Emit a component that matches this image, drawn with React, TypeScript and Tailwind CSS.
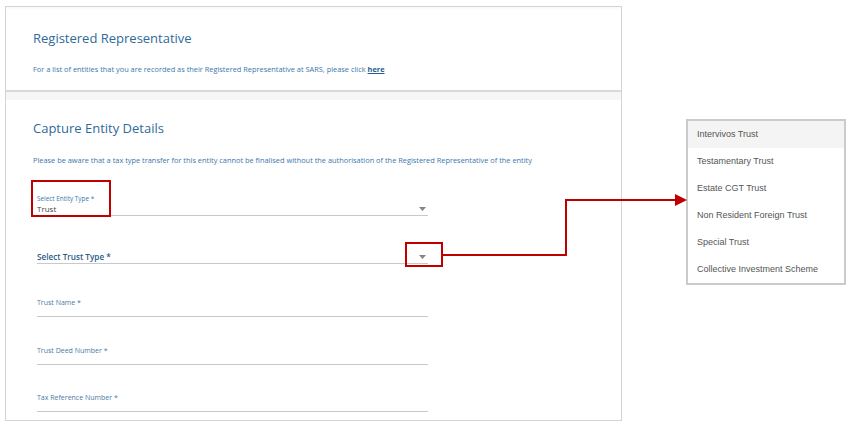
import { ReactNode } from "react";

const sans = { fontFamily: '"Open Sans", "Noto Sans", sans-serif' };
const arial = { fontFamily: '"Liberation Sans", Arial, sans-serif' };

const trustTypes = [
  "Intervivos Trust",
  "Testamentary Trust",
  "Estate CGT Trust",
  "Non Resident Foreign Trust",
  "Special Trust",
  "Collective Investment Scheme",
];

function Caret() {
  return (
    <svg width="7" height="4" viewBox="0 0 7 4" className="mr-[2px] mb-[4px]">
      <polygon points="0,0 7,0 3.5,4" fill="#858585" />
    </svg>
  );
}

function TextField({ label, h }: { label: string; h: string }) {
  return (
    <div className={`${h} flex flex-col justify-end border-b border-[#c9c9c9] pb-[8px]`}>
      <span className="text-[7px] leading-[10px] text-[#4a7aa6]">{label}</span>
    </div>
  );
}

function Section({ children, className }: { children: ReactNode; className?: string }) {
  return <div className={`px-[27px] ${className ?? ""}`}>{children}</div>;
}

export default function App() {
  return (
    <div className="relative w-[850px] h-[426px] bg-white overflow-hidden" style={sans}>
      <div className="flex items-start pl-[5px] pt-[6px]">
        {/* main form panel */}
        <div className="w-[617px] h-[415px] border border-[#d4d4d4] bg-white flex flex-col">
          <Section className="pt-[21px] h-[83px] bg-gradient-to-b from-[#f9f9f9] to-white from-0% to-[4%]">
            <h1 className="text-[13px] leading-[20px] text-[#2f6a9a]">Registered Representative</h1>
            <p className="mt-[16px] text-[7.4px] leading-[10px] text-[#3a78ab]">
              For a list of entities that you are recorded as their Registered Representative at SARS, please click{" "}
              <span className="font-bold underline text-[#245a88]">here</span>
            </p>
          </Section>
          <div className="h-[2px] bg-[#d9d9d9]" />
          <div className="h-[8px] bg-[#f6f6f6]" />

          <Section className="pt-[18px]">
            <h2 className="text-[13px] leading-[20px] text-[#2f6a9a]">Capture Entity Details</h2>
            <p className="mt-[17px] text-[7.4px] leading-[10px] text-[#3a78ab]">
              Please be aware that a tax type transfer for this entity cannot be finalised without the authorisation of the Registered Representative of the entity
            </p>

            <div className="ml-[4px] w-[391px]">
              {/* entity type select */}
              <div className="h-[51px] flex items-end justify-between border-b border-[#c9c9c9]">
                <div className="flex flex-col">
                  <span className="text-[6.4px] leading-[8px] text-[#3a78ab]">Select Entity Type *</span>
                  <span className="text-[8px] leading-[12px] text-[#444]">Trust</span>
                </div>
                <Caret />
              </div>

              {/* trust type select */}
              <div className="h-[48px] flex items-end justify-between border-b border-[#c9c9c9]">
                <span className="text-[8.2px] leading-[12px] font-semibold text-[#2b5b86]">Select Trust Type *</span>
                <Caret />
              </div>

              <TextField label="Trust Name *" h="h-[53px]" />
              <TextField label="Trust Deed Number *" h="h-[48px]" />
              <TextField label="Tax Reference Number *" h="h-[47px]" />
            </div>
          </Section>
        </div>

        {/* dropdown options */}
        <div className="ml-[64px] mt-[113px] w-[160px] border-2 border-[#cbcbcb] bg-white" style={arial}>
          {trustTypes.map((t, i) => (
            <div
              key={t}
              className={`h-[27px] flex items-center pl-[9px] text-[9px] text-[#555] ${i === 0 ? "bg-[#f4f4f4]" : ""}`}
            >
              {t}
            </div>
          ))}
        </div>
      </div>

      {/* annotation overlays */}
      <div className="absolute left-[31px] top-[180px] w-[80px] h-[37px] border-2 border-[#c00000]" />
      <div className="absolute left-[405px] top-[242px] w-[38px] h-[25px] border-2 border-[#c00000]" />
      <svg className="absolute left-0 top-0 pointer-events-none" width="850" height="426">
        <path d="M443 255 H566 V200 H677" fill="none" stroke="#c00000" strokeWidth="2" />
        <polygon points="675,194 687,200 675,206" fill="#c00000" />
      </svg>
    </div>
  );
}
